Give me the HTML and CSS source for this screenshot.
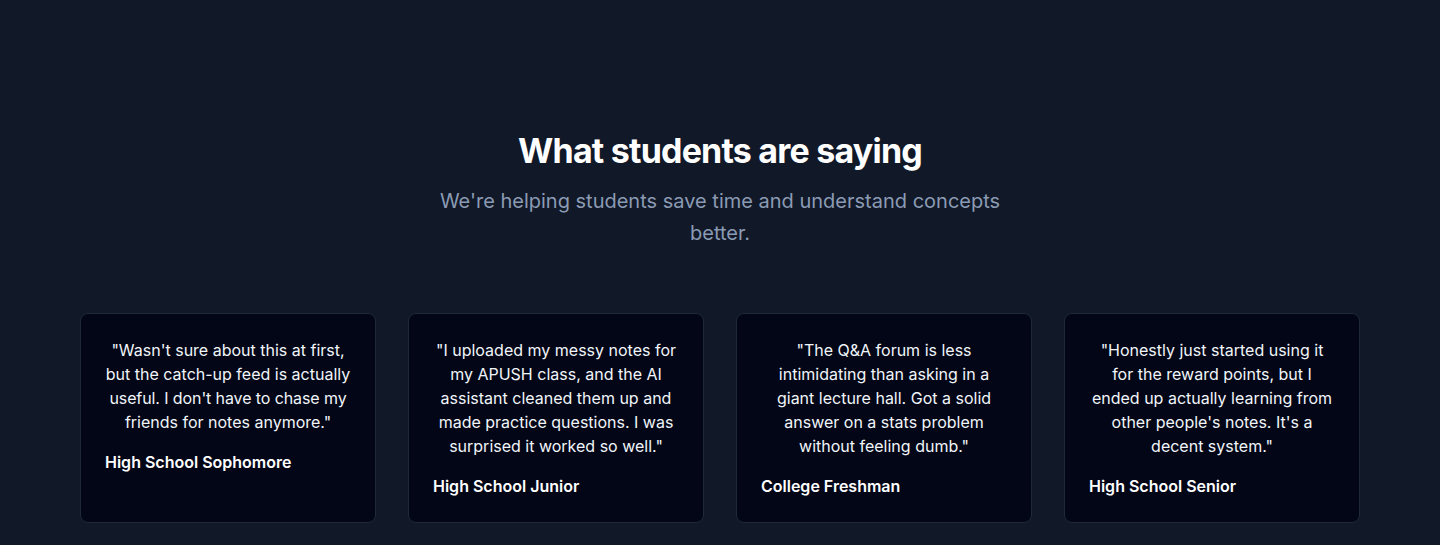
FILE: index.html
```html
<!DOCTYPE html>
<html lang="en">
<head>
<meta charset="utf-8">
<title>Testimonials</title>
<link rel="stylesheet" href="styles.css">
</head>
<body>
<section class="testimonials">
  <header class="intro">
    <h2 class="title">What students are saying</h2>
    <p class="subtitle">We're helping students save time and understand concepts better.</p>
  </header>
  <div class="grid">
    <article class="card">
      <p class="quote">"Wasn't sure about this at first, but the catch-up feed is actually <span class="tight">useful. I don't have to chase my</span> friends for notes anymore."</p>
      <p class="author">High School Sophomore</p>
    </article>
    <article class="card">
      <p class="quote">"I uploaded my messy notes for my APUSH class, and the AI assistant cleaned them up and made practice questions. I was surprised it worked so well."</p>
      <p class="author">High School Junior</p>
    </article>
    <article class="card">
      <p class="quote">"The Q&amp;A forum is less intimidating than asking in a giant lecture hall. Got a solid answer on a stats problem without feeling dumb."</p>
      <p class="author">College Freshman</p>
    </article>
    <article class="card">
      <p class="quote">"Honestly just started using it for the reward points, but I ended up actually learning from other people's notes. It's a decent system."</p>
      <p class="author">High School Senior</p>
    </article>
  </div>
</section>
</body>
</html>
```
FILE: styles.css
```css
* { box-sizing: border-box; }
html, body { margin: 0; padding: 0; }
body {
  background: #111827;
  font-family: Inter, "Noto Sans", sans-serif;
  color: #fff;
  height: 545px;
  overflow: hidden;
}
.testimonials {
  max-width: 1280px;
  margin: 0 auto;
  padding-top: 131px;
}
.intro {
  text-align: center;
  margin-bottom: 64px;
}
.title {
  margin: 0;
  font-size: 34px;
  line-height: 40px;
  font-weight: 700;
  letter-spacing: -0.8px;
  color: #fff;
}
.subtitle {
  margin: 14px auto 0;
  max-width: 576px;
  font-size: 20px;
  line-height: 32px;
  color: #8b9bb4;
}
.grid {
  display: grid;
  grid-template-columns: repeat(4, 1fr);
  gap: 32px;
}
.card {
  background: #020617;
  border: 1px solid #1f2937;
  border-radius: 8px;
  padding: 24px 23px;
}
.quote {
  margin: 0;
  font-size: 16px;
  line-height: 24px;
  text-align: center;
  color: #f1f5f9;
}
.tight {
  letter-spacing: -0.1px;
}
.author {
  margin: 16px 0 0;
  padding-left: 1px;
  font-size: 16px;
  line-height: 24px;
  font-weight: 600;
  color: #fff;
}
```
